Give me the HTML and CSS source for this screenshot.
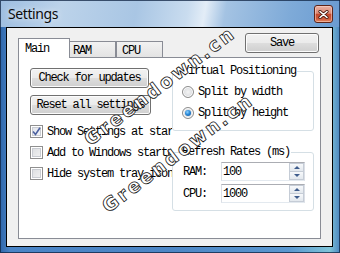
FILE: index.html
```html
<!DOCTYPE html>
<html>
<head>
<meta charset="utf-8">
<link rel="stylesheet" href="styles.css">
</head>
<body>
<div class="window">
  <div class="titlebar">
    <span class="title">Settings</span>
    <span class="close">
      <svg width="11" height="9" viewBox="0 0 11 9">
        <path d="M2 1.5 L9 7.5 M9 1.5 L2 7.5" stroke="#4a1a10" stroke-width="3.2" stroke-linecap="round"/>
        <path d="M2 1.5 L9 7.5 M9 1.5 L2 7.5" stroke="#fff" stroke-width="1.6" stroke-linecap="round"/>
      </svg>
    </span>
  </div>
  <div class="client">
    <div class="header">
      <div class="tabs">
        <div class="tab active">Main</div>
        <div class="tab ram">RAM</div>
        <div class="tab cpu">CPU</div>
      </div>
      <button class="btn save">Save</button>
    </div>
    <div class="panel">
      <div class="left">
        <button class="btn check">Check for updates</button>
        <button class="btn reset">Reset all settings</button>
        <div class="cb"><span class="box checked"><svg width="9" height="9" viewBox="0 0 9 9"><path d="M1 4.5 L3.5 7.5 L8 0.8" fill="none" stroke="#4c61a0" stroke-width="1.6"/></svg></span><span class="lbl">Show Settings at startup</span></div>
        <div class="cb"><span class="box"></span><span class="lbl">Add to Windows startup</span></div>
        <div class="cb"><span class="box"></span><span class="lbl">Hide system tray icon</span></div>
      </div>
      <div class="right">
        <fieldset class="group g1">
          <legend>Virtual Positioning</legend>
          <div class="rrow"><span class="radio"></span><span>Split by width</span></div>
          <div class="rrow"><span class="radio on"></span><span>Split by height</span></div>
        </fieldset>
        <fieldset class="group g2">
          <legend>Refresh Rates (ms)</legend>
          <div class="field"><span class="flabel">RAM:</span><div class="spin"><span class="val">100</span><div class="arrows"><span class="arr up"></span><span class="arr down"></span></div></div></div>
          <div class="field f2"><span class="flabel">CPU:</span><div class="spin"><span class="val">1000</span><div class="arrows"><span class="arr up"></span><span class="arr down"></span></div></div></div>
        </fieldset>
      </div>
    </div>
  </div>
  <div class="wm wm1">Greendown.cn</div>
  <div class="wm wm2">Greendown.cn</div>
</div>
</body>
</html>
```
FILE: styles.css
```css
html, body {
  margin: 0;
  padding: 0;
}
body {
  width: 340px;
  height: 253px;
  overflow: hidden;
}
.window {
  position: relative;
  width: 340px;
  height: 253px;
  overflow: hidden;
  background: linear-gradient(to right, #2f66aa 0%, #4a84c6 3%, #4d86c5 50%, #5a97cf 85%, #7ec3d8 97%, #4c86c0 100%);
  box-shadow: inset 0 0 0 1px rgba(15, 35, 65, 0.75);
  font-family: "Liberation Mono", "DejaVu Sans Mono", monospace;
  font-size: 12px;
  letter-spacing: -1.2px;
  color: #000;
}
.titlebar {
  height: 27px;
  display: flex;
  align-items: flex-start;
  justify-content: space-between;
  padding: 0 7px 0 8px;
  background: linear-gradient(100deg, #9dbde0 0%, #bcd3ea 18%, #a9c6e4 40%, #c9dcef 55%, #e3edf7 60%, #a4c3e3 66%, #7eaad8 85%, #6a9bd1 100%);
  box-shadow: inset 1px 1px 0 rgba(15, 35, 65, 0.75), inset -1px 0 0 rgba(15, 35, 65, 0.75);
}
.title {
  font-family: "Noto Sans", "Open Sans", sans-serif;
  font-size: 14px;
  letter-spacing: -0.4px;
  line-height: 19px;
  margin-top: 4px;
  color: #0c0c0c;
  text-shadow: 0 0 6px rgba(255, 255, 255, 0.9);
}
.close {
  margin-top: 5px;
  width: 19px;
  height: 18px;
  box-sizing: border-box;
  border: 1px solid #5e2418;
  border-radius: 3px;
  background: linear-gradient(#eab1a3 0%, #dc8a76 45%, #c4482d 52%, #cf5a3c 80%, #e28a62 100%);
  box-shadow: inset 0 0 0 1px rgba(255, 220, 210, 0.5);
  display: flex;
  align-items: center;
  justify-content: center;
}
.client {
  margin-left: 6px;
  width: 327px;
  height: 220px;
  box-sizing: border-box;
  border: 1px solid #000;
  background: #f0f0f0;
  padding: 5px 11px 7px 11px;
  display: flex;
  flex-direction: column;
}
.header {
  height: 24px;
  display: flex;
  justify-content: space-between;
}
.tabs {
  display: flex;
  align-items: flex-end;
  align-self: flex-end;
}
.tab {
  box-sizing: border-box;
  height: 16px;
  border: 1px solid #898c95;
  border-bottom: none;
  background: linear-gradient(#f2f2f2, #e3e3e3);
  padding: 3px 0 0 6px;
  line-height: 13px;
}
.tab.active {
  position: relative;
  z-index: 2;
  width: 52px;
  height: 20px;
  margin-bottom: -1px;
  background: #fff;
  padding: 4px 0 0 6px;
}
.tab.ram {
  width: 46px;
  padding-left: 3px;
  border-left: none;
}
.tab.cpu {
  width: 47px;
  padding-left: 5px;
}
.btn {
  box-sizing: border-box;
  height: 20px;
  border: 1px solid #707070;
  border-radius: 3px;
  background: linear-gradient(#f2f2f2 0%, #ebebeb 48%, #dddddd 52%, #cfcfcf 100%);
  box-shadow: inset 0 0 0 1px #fcfcfc;
  font: inherit;
  letter-spacing: inherit;
  color: #000;
  padding: 0;
  text-align: center;
  line-height: 17px;
}
.save {
  width: 74px;
  margin-right: 2px;
}
.panel {
  height: 182px;
  box-sizing: border-box;
  border: 1px solid #898c95;
  background: #fff;
  display: flex;
}
.left {
  width: 142px;
  margin-left: 11px;
  overflow: hidden;
  display: flex;
  flex-direction: column;
  align-items: flex-start;
}
.check {
  margin-top: 10px;
  width: 119px;
}
.reset {
  margin-top: 7px;
  width: 121px;
}
.reset + .cb {
  margin-top: 6px;
}
.cb {
  height: 21px;
  display: flex;
  align-items: center;
  white-space: nowrap;
}
.box {
  flex: none;
  width: 13px;
  height: 13px;
  box-sizing: border-box;
  border: 1px solid #8f8f8f;
  background: linear-gradient(135deg, #d9dbde 0%, #f4f4f4 100%);
  box-shadow: inset 0 0 0 1px #fff, inset 0 0 0 2px #c9ccd2;
  margin-right: 4px;
  display: flex;
  align-items: center;
  justify-content: center;
}
.box.checked {
  background: linear-gradient(135deg, #dfe2ea 0%, #f6f7fa 100%);
}
.lbl {
  line-height: 14px;
}
.right {
  width: 142px;
  display: flex;
  flex-direction: column;
}
.group {
  margin: 0;
  min-width: 0;
  border: 1px solid #d5dfe5;
  border-radius: 3px;
  padding: 3px 0 7px 9px;
}
.group legend {
  margin-left: -1px;
  padding: 0 1px;
  line-height: 14px;
}
.g1 {
  margin-top: 6px;
}
.g2 {
  margin-top: 14px;
}
.rrow {
  height: 21px;
  display: flex;
  align-items: center;
}
.radio {
  flex: none;
  width: 12px;
  height: 12px;
  box-sizing: border-box;
  border-radius: 50%;
  border: 1px solid #8d8d8d;
  background: radial-gradient(circle at 50% 50%, #f4f4f4 0%, #dadcdf 70%);
  box-shadow: inset 0 0 0 1px #fff;
  margin-right: 4px;
  position: relative;
}
.radio.on::after {
  content: "";
  position: absolute;
  left: 2px;
  top: 2px;
  width: 6px;
  height: 6px;
  border-radius: 50%;
  background: radial-gradient(circle at 40% 35%, #8fd2ff 0%, #2a8ad8 45%, #0c4f9a 100%);
}
.field {
  height: 19px;
  display: flex;
  align-items: center;
}
.f2 {
  margin-top: 3px;
}
.flabel {
  width: 38px;
  margin-left: 1px;
}
.spin {
  width: 84px;
  height: 19px;
  box-sizing: border-box;
  border: 1px solid #dbdfe6;
  border-top-color: #abadb3;
  border-bottom-color: #e3e9ef;
  display: flex;
  align-items: center;
  justify-content: space-between;
  background: #fff;
}
.val {
  padding-left: 1px;
  line-height: 14px;
}
.arrows {
  width: 15px;
  height: 17px;
  display: flex;
  flex-direction: column;
}
.arr {
  flex: 1;
  box-sizing: border-box;
  border: 1px solid #c5ccd6;
  background: linear-gradient(#f7f9fb, #e3e8ee);
  position: relative;
}
.arr.up {
  border-bottom: none;
}
.arr::after {
  content: "";
  position: absolute;
  left: 4px;
  width: 0;
  height: 0;
  border-left: 3px solid transparent;
  border-right: 3px solid transparent;
}
.arr.up::after {
  top: 2px;
  border-bottom: 3px solid #3f5c8c;
}
.arr.down::after {
  top: 2px;
  border-top: 3px solid #3f5c8c;
}
.wm {
  position: absolute;
  font-family: "DejaVu Sans", sans-serif;
  font-weight: bold;
  font-size: 19px;
  letter-spacing: 2.5px;
  color: #fff;
  -webkit-text-stroke: 0.8px #111;
  transform-origin: 0 50%;
  transform: rotate(-37deg);
  white-space: nowrap;
  line-height: 20px;
  z-index: 5;
}
.wm1 {
  left: 86px;
  top: 131px;
}
.wm2 {
  left: 104px;
  top: 198px;
}
```
